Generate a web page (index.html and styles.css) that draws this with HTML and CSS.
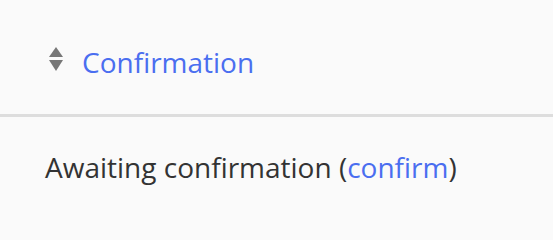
FILE: index.html
```html
<!DOCTYPE html>
<html>
<head>
<meta charset="utf-8">
<link rel="stylesheet" href="styles.css">
</head>
<body>
<div class="grid">
  <div class="head-row">
    <span class="sort-icon">
      <svg width="14" height="24" viewBox="0 0 14 24"><path d="M7 0 L14 10 L0 10 Z" fill="#777"/><path d="M0 13 L14 13 L7 24 Z" fill="#777"/></svg>
    </span>
    <a class="sort-link" href="#">Confirmation</a>
  </div>
  <div class="body-row">Awaiting confirmation (<a class="link" href="#">confirm</a>)</div>
</div>
</body>
</html>
```
FILE: styles.css
```css
html, body {
  margin: 0;
  padding: 0;
  background: #fafafa;
}
body {
  font-family: "Open Sans", sans-serif;
  color: #333;
  font-size: 28px;
  line-height: 38px;
}
.grid {
  width: 553px;
}
.head-row {
  box-sizing: border-box;
  height: 117px;
  padding: 43px 0 0 49px;
  border-bottom: 3px solid #dddddd;
  display: flex;
  align-items: flex-start;
  gap: 19px;
  white-space: nowrap;
}
.sort-icon {
  display: block;
  line-height: 0;
  margin-top: 4px;
}
.sort-link, .link {
  color: #4a6ef0;
  text-decoration: none;
}
.body-row {
  padding: 31px 0 0 45px;
  white-space: nowrap;
}
```
